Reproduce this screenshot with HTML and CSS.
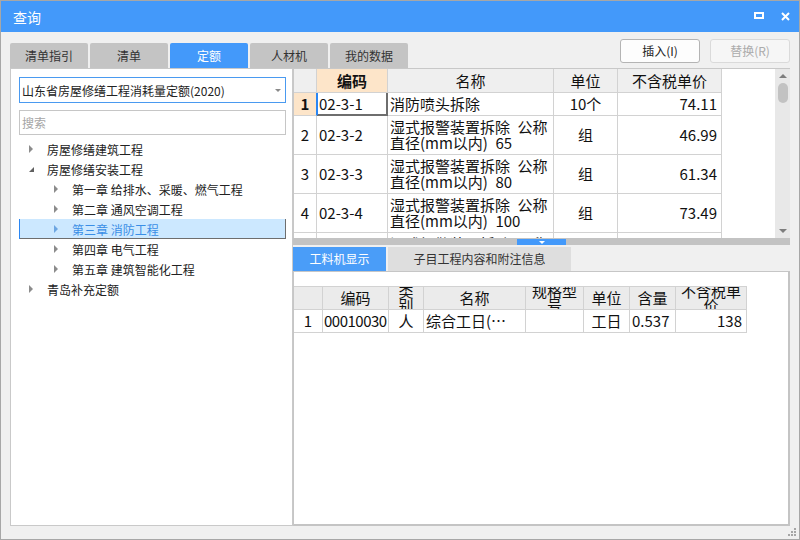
FILE: index.html
```html
<!DOCTYPE html>
<html lang="zh-CN">
<head>
<meta charset="utf-8">
<title>查询</title>
<link rel="stylesheet" href="styles.css">
</head>
<body>
<div class="window">
  <header class="titlebar">
    <span class="title">查询</span>
    <span class="btn-max"></span>
    <svg class="btn-close" width="9" height="9" viewBox="0 0 9 9"><path d="M1 1L8 8M8 1L1 8" stroke="#fff" stroke-width="2"/></svg>
  </header>
  <div class="toolbar">
    <nav class="tabs">
      <span class="tab">清单指引</span>
      <span class="tab">清单</span>
      <span class="tab active">定额</span>
      <span class="tab">人材机</span>
      <span class="tab">我的数据</span>
    </nav>
    <div class="actions">
      <button class="btn">插入(I)</button>
      <button class="btn disabled">替换(R)</button>
    </div>
  </div>
  <div class="main">
    <aside class="left">
      <div class="select"><span>山东省房屋修缮工程消耗量定额(2020)</span><i class="caret"></i></div>
      <div class="search">搜索</div>
      <ul class="tree">
        <li class="node l0"><i class="arr"></i>房屋修缮建筑工程</li>
        <li class="node l0"><i class="arr open"></i>房屋修缮安装工程</li>
        <li class="node l1"><i class="arr"></i>第一章 给排水、采暖、燃气工程</li>
        <li class="node l1"><i class="arr"></i>第二章 通风空调工程</li>
        <li class="node l1 sel"><i class="arr"></i>第三章 消防工程</li>
        <li class="node l1"><i class="arr"></i>第四章 电气工程</li>
        <li class="node l1"><i class="arr"></i>第五章 建筑智能化工程</li>
        <li class="node l0"><i class="arr"></i>青岛补充定额</li>
      </ul>
    </aside>
    <section class="right">
      <div class="top">
        <div class="grid-wrap">
          <div class="grid g1">
            <div class="c h"></div>
            <div class="c h pk">编码</div>
            <div class="c h">名称</div>
            <div class="c h">单位</div>
            <div class="c h">不含税单价</div>

            <div class="c ctr pk rn-sel">1</div>
            <div class="c sel">02-3-1</div>
            <div class="c">消防喷头拆除</div>
            <div class="c ctr">10个</div>
            <div class="c rt">74.11</div>

            <div class="c ctr">2</div>
            <div class="c">02-3-2</div>
            <div class="c"><span>湿式报警装置拆除&ensp;公称<br>直径(mm以内)&ensp;65</span></div>
            <div class="c ctr">组</div>
            <div class="c rt">46.99</div>

            <div class="c ctr">3</div>
            <div class="c">02-3-3</div>
            <div class="c"><span>湿式报警装置拆除&ensp;公称<br>直径(mm以内)&ensp;80</span></div>
            <div class="c ctr">组</div>
            <div class="c rt">61.34</div>

            <div class="c ctr">4</div>
            <div class="c">02-3-4</div>
            <div class="c"><span>湿式报警装置拆除&ensp;公称<br>直径(mm以内)&ensp;100</span></div>
            <div class="c ctr">组</div>
            <div class="c rt">73.49</div>

            <div class="c ctr"></div>
            <div class="c"></div>
            <div class="c part"><span>湿式报警装置拆除&ensp;公称</span></div>
            <div class="c ctr"></div>
            <div class="c rt"></div>
          </div>
        </div>
        <div class="vscroll">
          <span class="sb-btn"><i class="up"></i></span>
          <span class="thumb"></span>
          <span class="sb-fill"></span>
          <span class="sb-btn"><i class="down"></i></span>
        </div>
      </div>
      <div class="splitter"><span class="handle"><i></i></span></div>
      <div class="subtabs">
        <span class="stab active">工料机显示</span>
        <span class="stab wide">子目工程内容和附注信息</span>
      </div>
      <div class="bottom">
        <div class="grid g2">
          <div class="c h"></div>
          <div class="c h">编码</div>
          <div class="c h h2">类<br>别</div>
          <div class="c h">名称</div>
          <div class="c h h2">规格型<br>号</div>
          <div class="c h">单位</div>
          <div class="c h">含量</div>
          <div class="c h h2">不含税单<br>价</div>

          <div class="c ctr">1</div>
          <div class="c tight">00010030</div>
          <div class="c ctr">人</div>
          <div class="c">综合工日(…</div>
          <div class="c"></div>
          <div class="c ctr">工日</div>
          <div class="c">0.537</div>
          <div class="c rt">138</div>
        </div>
      </div>
    </section>
  </div>
  <svg class="grip" width="8" height="8" viewBox="0 0 8 8">
    <rect x="6" y="0" width="2" height="2" fill="#a6a6a6"/>
    <rect x="3" y="3" width="2" height="2" fill="#a6a6a6"/>
    <rect x="6" y="3" width="2" height="2" fill="#a6a6a6"/>
    <rect x="0" y="6" width="2" height="2" fill="#a6a6a6"/>
    <rect x="3" y="6" width="2" height="2" fill="#a6a6a6"/>
    <rect x="6" y="6" width="2" height="2" fill="#a6a6a6"/>
  </svg>
</div>
</body>
</html>
```
FILE: styles.css
```css
* { box-sizing: border-box; margin: 0; padding: 0; }
html, body { width: 800px; height: 540px; overflow: hidden; }
body {
  font-family: "Noto Sans CJK SC", "Noto Sans", sans-serif;
  font-size: 12px;
  color: #222;
  background: #f0f0f0;
}
.window {
  position: relative;
  width: 800px;
  height: 540px;
  border: 1px solid #a7a7a7;
  background: #f0f0f0;
  display: flex;
  flex-direction: column;
}

/* title bar */
.titlebar {
  height: 31px;
  flex: none;
  background: #4399fa;
  color: #fff;
  display: flex;
  align-items: center;
  padding: 0 9px 0 12px;
}
.title { flex: 1; font-size: 14px; line-height: 16px; margin-top: 1px; }
.btn-max {
  width: 10px;
  height: 7px;
  border: 2px solid #fff;
  margin-right: 17px;
  margin-top: -2px;
}
.btn-close { display: block; margin-top: -1px; }

/* toolbar */
.toolbar { height: 36px; flex: none; display: flex; padding: 0 9px; }
.tabs { display: flex; gap: 2px; align-self: flex-end; }
.tab {
  width: 78px;
  height: 25px;
  line-height: 25px;
  text-align: center;
  background: #c4c4c4;
  border-radius: 2px 2px 0 0;
  color: #333;
}
.tab.active { background: #4399fa; color: #fff; }
.actions { margin-left: auto; display: flex; gap: 10px; padding-top: 7px; }
.btn {
  width: 80px;
  height: 24px;
  border: 1px solid #b4b4b4;
  border-radius: 3px;
  background: #fdfdfd;
  font: inherit;
  font-size: 12px;
  line-height: 22px;
  color: #222;
}
.btn.disabled { border-color: #dadada; color: #ababab; background: #f6f6f6; }

/* main */
.main { flex: 1; display: flex; padding: 0 9px 13px; min-height: 0; }
.left {
  width: 283px;
  flex: none;
  background: #fff;
  border: 1px solid #c9c9c9;
  padding: 8px 6px 0 8px;
}
.select {
  height: 26px;
  border: 1px solid #4a9af0;
  display: flex;
  align-items: center;
  padding: 0 4px 0 2px;
  color: #222;
  white-space: nowrap;
}
.caret {
  margin-left: auto;
  width: 0;
  height: 0;
  border-top: 3px solid #8a8a8a;
  border-left: 3px solid transparent;
  border-right: 3px solid transparent;
}
.search {
  margin-top: 7px;
  height: 25px;
  border: 1px solid #c6c6c6;
  padding: 0 2px;
  line-height: 23px;
  color: #a5a5a5;
}
.tree { margin-top: 4px; list-style: none; }
.node {
  height: 20px;
  display: flex;
  align-items: center;
  white-space: nowrap;
  color: #222;
}
.l0 { padding-left: 10px; }
.l1 { padding-left: 35px; }
.arr { width: 18px; height: 20px; flex: none; display: flex; align-items: center; }
.arr::before {
  content: "";
  width: 0;
  height: 0;
  border-left: 4px solid #8c8c8c;
  border-top: 4px solid transparent;
  border-bottom: 4px solid transparent;
}
.arr.open::before {
  border-top: 0;
  border-left: 5px solid transparent;
  border-bottom: 5px solid #606060;
  margin-top: 1px;
}
.node.sel { background: #cce8ff; color: #3a8ee6; }
.node.sel .arr::before { border-left-color: #6da6e2; }

/* right */
.right { flex: 1; display: flex; flex-direction: column; min-width: 0; }
.top {
  height: 170px;
  flex: none;
  display: flex;
  background: #fff;
  border-top: 1px solid #c8c8c8;
  border-left: 1px solid #c8c8c8;
}
.grid-wrap { flex: 1; overflow: hidden; }
.vscroll {
  width: 15px;
  flex: none;
  background: #e8e8e8;
  display: flex;
  flex-direction: column;
  align-items: center;
}
.sb-btn { height: 14px; width: 15px; display: flex; align-items: center; justify-content: center; }
.sb-btn .up { border-bottom: 4px solid #7d7d7d; border-left: 4px solid transparent; border-right: 4px solid transparent; }
.sb-btn .down { border-top: 4px solid #7d7d7d; border-left: 4px solid transparent; border-right: 4px solid transparent; }
.thumb { width: 10px; height: 20px; border-radius: 5px; background: #c2c2c2; }
.sb-fill { flex: 1; }

.grid {
  display: grid;
  font-size: 15px;
  line-height: 16px;
  color: #111;
}
.g1 {
  grid-template-columns: 23px 71px 166px 64px 104px;
  grid-template-rows: 24px 23px 39px 39px 39px 6px;
}
.c {
  display: flex;
  align-items: center;
  border-right: 1px solid #d2d2d2;
  border-bottom: 1px solid #d2d2d2;
  padding: 0 2px;
  overflow: hidden;
  white-space: nowrap;
}
.c.part { align-items: flex-start; padding-top: 3px; }
.c.h { background: #efefef; justify-content: center; }
.c.pk { background: #fde5c9; font-weight: bold; }
.ctr { justify-content: center; }
.rt { justify-content: flex-end; padding-right: 4px; }
.rn-sel { border-right-color: #2a86f3; }
.sel {
  border-right-color: #6e6e6e;
  border-bottom-color: #6e6e6e;
  box-shadow: inset 1px 0 0 #2a86f3, inset -1px -1px 0 #6e6e6e;
}

.splitter {
  height: 7px;
  flex: none;
  background: #c3c3c3;
  display: flex;
  justify-content: center;
  padding-top: 1px;
}
.handle {
  width: 49px;
  background: #4399fa;
  display: flex;
  justify-content: center;
  padding-top: 2px;
}
.handle i {
  width: 0;
  height: 0;
  border-top: 3px solid #fff;
  border-left: 3px solid transparent;
  border-right: 3px solid transparent;
}

.subtabs { height: 26px; flex: none; display: flex; gap: 2px; padding-top: 2px; }
.stab {
  height: 24px;
  line-height: 24px;
  text-align: center;
  background: #dedede;
  color: #333;
}
.stab.active { width: 93px; background: #4a9df8; color: #fff; }
.stab.wide { width: 183px; }

.bottom {
  flex: 1;
  background: #fff;
  border-top: 1px solid #c6c6c6;
  border-left: 1px solid #c6c6c6;
  border-right: 2px solid #c4c4c4;
  border-bottom: 2px solid #c4c4c4;
  padding-top: 14px;
}
.g2 {
  grid-template-columns: 29px 66px 35px 102px 58px 46px 46px 71px;
  grid-template-rows: 24px 23px;
  width: 453px;
}
.g2 .h { border-top: 1px solid #d2d2d2; background: #ebebeb; }
.g2 .h2 { white-space: normal; text-align: center; line-height: 14px; }
.tight { letter-spacing: -0.5px; padding: 0 0 0 1px; }

.grip { position: absolute; right: 3px; bottom: 3px; }
```
